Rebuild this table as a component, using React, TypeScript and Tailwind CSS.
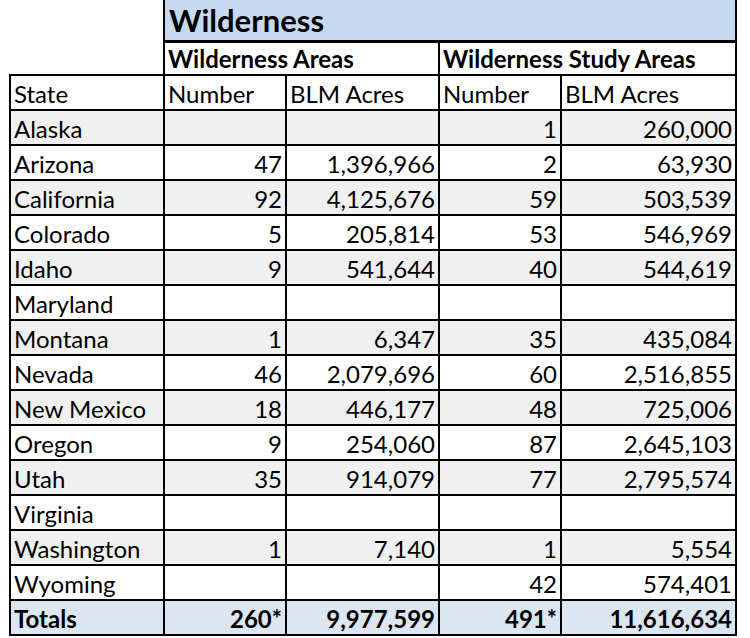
import React from "react";

type Row = { s: string; a?: string; b?: string; c?: string; d?: string };

const rows: Row[] = [
  { s: "Alaska", c: "1", d: "260,000" },
  { s: "Arizona", a: "47", b: "1,396,966", c: "2", d: "63,930" },
  { s: "California", a: "92", b: "4,125,676", c: "59", d: "503,539" },
  { s: "Colorado", a: "5", b: "205,814", c: "53", d: "546,969" },
  { s: "Idaho", a: "9", b: "541,644", c: "40", d: "544,619" },
  { s: "Maryland" },
  { s: "Montana", a: "1", b: "6,347", c: "35", d: "435,084" },
  { s: "Nevada", a: "46", b: "2,079,696", c: "60", d: "2,516,855" },
  { s: "New Mexico", a: "18", b: "446,177", c: "48", d: "725,006" },
  { s: "Oregon", a: "9", b: "254,060", c: "87", d: "2,645,103" },
  { s: "Utah", a: "35", b: "914,079", c: "77", d: "2,795,574" },
  { s: "Virginia" },
  { s: "Washington", a: "1", b: "7,140", c: "1", d: "5,554" },
  { s: "Wyoming", c: "42", d: "574,401" },
];

const cell = "border-2 border-black px-[3px] leading-none pt-[2px]";
const num = cell + " text-right";

export default function App() {
  return (
    <div
      className="w-[750px] h-[638px] bg-white overflow-hidden pl-[9px] text-black"
      style={{ fontFamily: "Lato, 'Open Sans', sans-serif" }}
    >
      <table className="table-fixed border-collapse text-[24px]">
        <colgroup>
          <col className="w-[154px]" />
          <col className="w-[122px]" />
          <col className="w-[153px]" />
          <col className="w-[122px]" />
          <col className="w-[175px]" />
        </colgroup>
        <tbody>
          <tr className="h-[41px]">
            <td className="p-0"></td>
            <td
              colSpan={4}
              className="border-2 border-t-0 border-b-[3px] border-black bg-[#c5d9f1] px-[4px] pt-[2px] text-[31px] font-bold leading-none align-middle"
            >
              Wilderness
            </td>
          </tr>
          <tr className="h-[34px]">
            <td className="p-0"></td>
            <td colSpan={2} className={cell + " font-bold"}>
              Wilderness Areas
            </td>
            <td colSpan={2} className={cell + " font-bold"}>
              Wilderness Study Areas
            </td>
          </tr>
          <tr className="h-[35px]">
            <td className={cell}>State</td>
            <td className={cell}>Number</td>
            <td className={cell}>BLM Acres</td>
            <td className={cell}>Number</td>
            <td className={cell}>BLM Acres</td>
          </tr>
          {rows.map((r, i) => (
            <tr
              key={r.s}
              className={
                "h-[35px] " + (i % 2 === 0 ? "bg-[#f0f0f0]" : "bg-white")
              }
            >
              <td className={cell}>{r.s}</td>
              <td className={num}>{r.a}</td>
              <td className={num}>{r.b}</td>
              <td className={num}>{r.c}</td>
              <td className={num}>{r.d}</td>
            </tr>
          ))}
          <tr className="h-[35px] bg-[#dce6f1] font-bold">
            <td className={cell}>Totals</td>
            <td className={num}>260*</td>
            <td className={num}>9,977,599</td>
            <td className={num}>491*</td>
            <td className={num}>11,616,634</td>
          </tr>
        </tbody>
      </table>
    </div>
  );
}
